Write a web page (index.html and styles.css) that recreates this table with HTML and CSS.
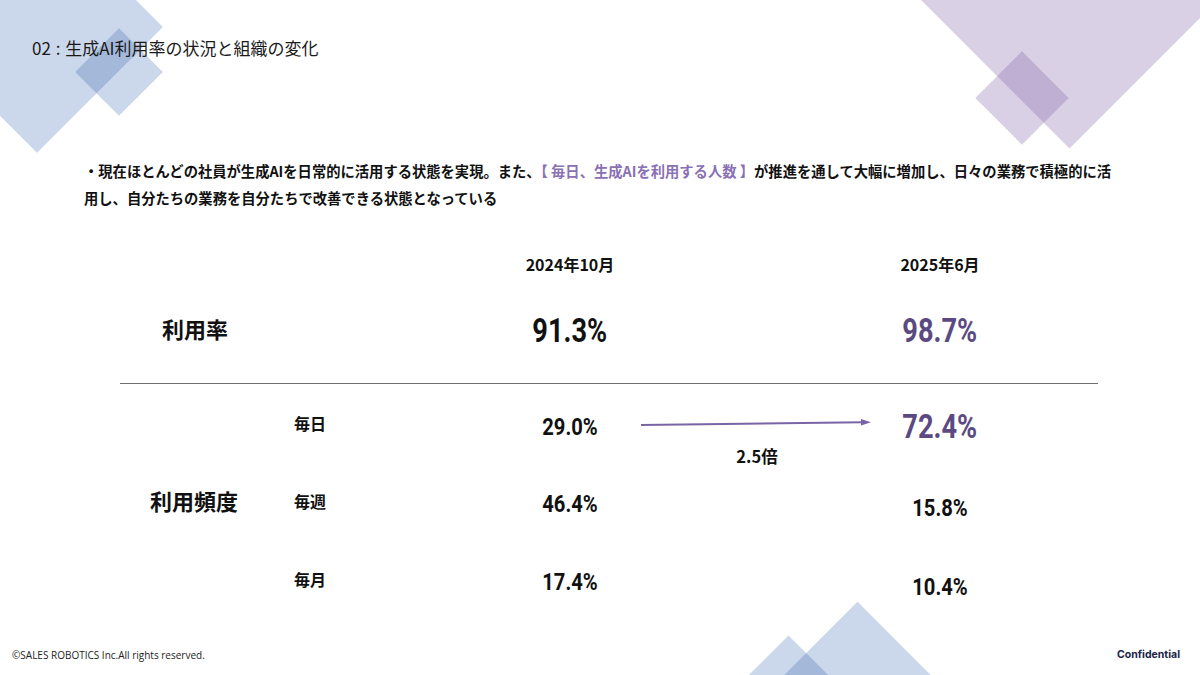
FILE: index.html
```html
<!DOCTYPE html>
<html lang="ja">
<head>
<meta charset="utf-8">
<title>02 : 生成AI利用率の状況と組織の変化</title>
<link rel="stylesheet" href="styles.css">
</head>
<body>
<div class="slide">
  <div class="deco blue big-tl"></div>
  <div class="deco blue small-tl"></div>
  <div class="deco purple big-tr"></div>
  <div class="deco purple small-tr"></div>
  <div class="deco blue big-b"></div>
  <div class="deco blue small-b"></div>

  <div class="content">
    <h1 class="title">02 : 生成AI利用率の状況と組織の変化</h1>

    <p class="lead">・現在ほとんどの社員が生成AIを日常的に活用する状態を実現。また、<span class="hl">【 毎日、生成AIを利用する人数 】</span>が推進を通して大幅に増加し、日々の業務で積極的に活<br>用し、自分たちの業務を自分たちで改善できる状態となっている</p>

    <div class="table">
      <div class="head c3 r1">2024年10月</div>
      <div class="head c5 r1">2025年6月</div>

      <div class="label-lg rate-label r2">利用率</div>
      <div class="c3 r2 cell"><span class="num big">91.3%</span></div>
      <div class="c5 r2 cell"><span class="num big purple-text">98.7%</span></div>

      <div class="divider"></div>

      <div class="label-lg freq-label">利用頻度</div>

      <div class="sub c2 r4">毎日</div>
      <div class="c3 r4 cell off4"><span class="num">29.0%</span></div>
      <div class="mid c4 r4">
        <svg class="arrow" width="250" height="10" viewBox="0 0 250 10">
          <line x1="11" y1="6" x2="233" y2="3.3" stroke="#7a64a6" stroke-width="2"/>
          <polygon points="231,0 241,3.2 231,6.4" fill="#7a64a6"/>
        </svg>
        <div class="ratio">2.5倍</div>
      </div>
      <div class="c5 r4 cell off3"><span class="num big purple-text">72.4%</span></div>

      <div class="sub c2 r5">毎週</div>
      <div class="c3 r5 cell off3"><span class="num">46.4%</span></div>
      <div class="c5 r5 cell off7"><span class="num">15.8%</span></div>

      <div class="sub c2 r6">毎月</div>
      <div class="c3 r6 cell off3"><span class="num">17.4%</span></div>
      <div class="c5 r6 cell off8"><span class="num">10.4%</span></div>
    </div>

    <footer class="footer">
      <span class="copy">©SALES ROBOTICS Inc.All rights reserved.</span>
      <span class="conf">Confidential</span>
    </footer>
  </div>
</div>
</body>
</html>
```

FILE: styles.css
```css
* { box-sizing: border-box; }
html, body { margin: 0; padding: 0; background: #fff; }
body {
  font-family: "Noto Sans CJK JP", "Noto Sans", sans-serif;
  color: #111;
}
.slide {
  position: relative;
  width: 1200px;
  height: 675px;
  overflow: hidden;
  background: #fff;
}

/* decorative diamonds */
.deco {
  position: absolute;
  transform: rotate(45deg);
  z-index: 0;
}
.blue { background: rgba(47, 95, 170, 0.25); }
.purple { background: rgba(128, 98, 168, 0.3); }
.big-tl { width: 178px; height: 178px; left: -52px; top: -62px; }
.small-tl { width: 62px; height: 62px; left: 88px; top: 41px; }
.big-tr { width: 311px; height: 311px; left: 914px; top: -227px; }
.small-tr { width: 66px; height: 66px; left: 989px; top: 65px; }
.big-b { width: 141px; height: 141px; left: 787px; top: 631px; }
.small-b { width: 85px; height: 85px; left: 746px; top: 653px; }

.content {
  position: relative;
  z-index: 1;
  height: 675px;
  display: flex;
  flex-direction: column;
}

.title {
  margin: 36px 0 0 32px;
  font-size: 17px;
  line-height: 24px;
  font-weight: 400;
  word-spacing: 1px;
  color: #1a1a1a;
}

.lead {
  margin: 97px 0 0 84px;
  font-size: 14.3px;
  line-height: 27px;
  font-weight: 700;
  color: #111;
}
.hl { color: #8a70b4; }

.table {
  margin: 39px 0 0 120px;
  width: 978px;
  display: grid;
  grid-template-columns: 160px 230px 120px 250px 120px 98px;
  grid-template-rows: 28px 104px 2px 78px 78px 78px;
}
.c2 { grid-column: 2; }
.c3 { grid-column: 3; }
.c4 { grid-column: 4; }
.c5 { grid-column: 5; }
.r1 { grid-row: 1; }
.r2 { grid-row: 2; }
.r4 { grid-row: 4; }
.r5 { grid-row: 5; }
.r6 { grid-row: 6; }

.head {
  font-size: 16px;
  font-weight: 700;
  line-height: 28px;
  text-align: center;
  white-space: nowrap;
}

.label-lg {
  font-size: 22px;
  font-weight: 700;
  line-height: 1;
  align-self: center;
  white-space: nowrap;
}
.rate-label {
  grid-column: 1 / 3;
  padding-left: 42px;
  margin-top: -4px;
}
.freq-label {
  grid-column: 1;
  grid-row: 4 / 7;
  padding-left: 30px;
  margin-top: -2px;
}

.sub {
  font-size: 16px;
  font-weight: 700;
  line-height: 1;
  align-self: center;
  padding-left: 14px;
}

.cell {
  align-self: center;
  text-align: center;
}
.off3 { margin-top: 6px; }
.off4 { margin-top: 8px; }
.off7 { margin-top: 14px; }
.off8 { margin-top: 16px; }

.num {
  display: inline-block;
  font-family: "Roboto", "Liberation Sans", sans-serif;
  font-weight: 700;
  font-size: 24px;
  line-height: 1;
  transform: scaleX(0.84);
  color: #111;
}
.num.big { font-size: 34px; transform: scaleX(0.8); }
.purple-text { color: #5b4a82; }

.divider {
  grid-column: 1 / -1;
  grid-row: 3;
  border-top: 1.5px solid #707070;
  align-self: center;
}

.mid {
  display: flex;
  flex-direction: column;
  align-items: center;
  padding-top: 35px;
}
.mid > * { flex-shrink: 0; }
.arrow { display: block; width: 250px; height: 10px; }
.ratio {
  margin-top: 17px;
  font-size: 16.5px;
  font-weight: 700;
  line-height: 20px;
  margin-left: 4px;
}

.footer {
  margin-top: auto;
  display: flex;
  justify-content: space-between;
  align-items: center;
  padding: 0 20px 13px 12px;
  height: 28px;
}
.copy {
  font-family: "Open Sans", "Noto Sans", sans-serif;
  font-size: 10px;
  color: #222;
}
.conf {
  font-family: "Inter", "Roboto", sans-serif;
  font-size: 10.5px;
  font-weight: 700;
  color: #1b2446;
}
```
